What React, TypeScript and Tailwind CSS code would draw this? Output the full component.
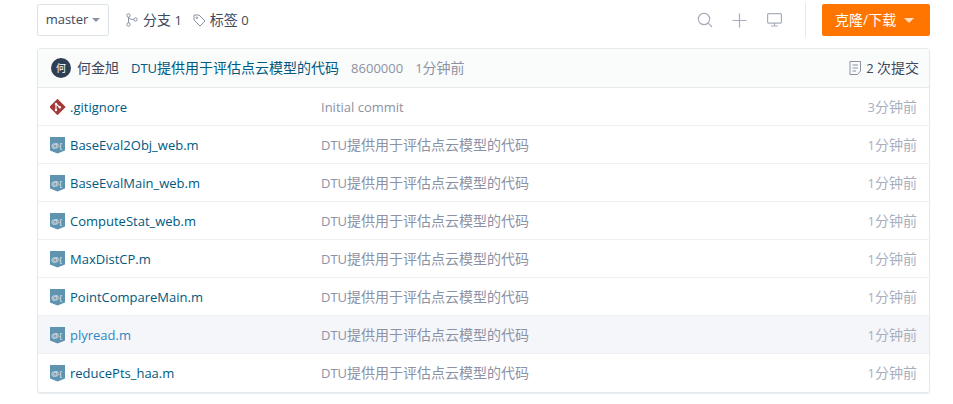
const Cjk = ({ children }: { children: React.ReactNode }) => <span className="text-sm">{children}</span>

interface FileRow {
    name: string
    initial?: boolean
    hover?: boolean
}

const files: FileRow[] = [
    { name: ".gitignore", initial: true },
    { name: "BaseEval2Obj_web.m" },
    { name: "BaseEvalMain_web.m" },
    { name: "ComputeStat_web.m" },
    { name: "MaxDistCP.m" },
    { name: "PointCompareMain.m" },
    { name: "plyread.m", hover: true },
    { name: "reducePts_haa.m" },
]

const GitIcon = () => (
    <svg width="16" height="16" viewBox="0 0 16 16" className="shrink-0">
        <path d="M7.5 .8 14.7 8 7.5 15.2 .3 8Z" fill="#a33a3a" stroke="#a33a3a" strokeLinejoin="round" strokeWidth="1.4" />
        <circle cx="6" cy="5" r="1.2" fill="#fff" />
        <circle cx="9.8" cy="8.2" r="1.2" fill="#fff" />
        <circle cx="6" cy="11" r="1.2" fill="#fff" />
        <path d="M6 5V11M6 5 9.8 8.2" stroke="#fff" strokeWidth="1.1" fill="none" />
    </svg>
)

const MatlabIcon = () => (
    <svg width="15" height="17" viewBox="0 0 15 17" className="shrink-0">
        <path d="M0 0H15V13.5L7.5 16.5 0 13.5Z" fill="#5f93b0" />
        <text x="1" y="10.5" fontSize="8" fill="#e8f1f5" fontFamily="'Liberation Sans', sans-serif">@{"{"}</text>
    </svg>
)

const App = () => {
    return (
        <div className="w-[953px] h-[404px] overflow-hidden bg-white pl-[37px] pr-[23px] pt-1 text-[13px] font-['Open_Sans','Noto_Sans_CJK_SC',sans-serif] text-[#40485b]">
            <div className="flex items-center h-8">
                <div className="flex items-center w-[72px] h-8 justify-center gap-1 rounded-[2px] border border-[#dce3e8]">
                    master
                    <span className="border-x-[4px] border-t-[4px] border-x-transparent border-t-[#8c92a4]" />
                </div>
                <div className="flex items-center gap-1 ml-[16px]">
                    <svg width="14" height="14" viewBox="0 0 14 14" fill="none" stroke="#8c92a4" strokeWidth="1">
                        <circle cx="3.5" cy="2.5" r="1.7" />
                        <circle cx="3.5" cy="11.5" r="1.7" />
                        <circle cx="10.5" cy="6.5" r="1.7" />
                        <path d="M3.5 4.2V9.8M3.5 4.2C4 6 6.5 6.5 8.8 6.5" />
                    </svg>
                    <span><Cjk>分支</Cjk> 1</span>
                </div>
                <div className="flex items-center gap-1 ml-[11px]">
                    <svg width="13" height="13" viewBox="0 0 13 13" fill="none" stroke="#8c92a4" strokeWidth="1">
                        <path d="M1 1H6L12 7 7 12 1 6Z" strokeLinejoin="round" />
                        <circle cx="3.8" cy="3.8" r="0.8" />
                    </svg>
                    <span><Cjk>标签</Cjk> 0</span>
                </div>
                <div className="flex items-center ml-auto">
                    <svg width="16" height="16" viewBox="0 0 16 16" fill="none" stroke="#a9aebd" strokeWidth="1.2">
                        <circle cx="7" cy="7" r="5.7" />
                        <path d="M11.2 11.2 15 15" />
                    </svg>
                    <svg width="15" height="15" viewBox="0 0 15 15" fill="none" stroke="#a9aebd" strokeWidth="1.2" className="ml-[19px]">
                        <path d="M7.5 0.5V14.5M0.5 7.5H14.5" />
                    </svg>
                    <svg width="15" height="14" viewBox="0 0 15 14" fill="none" stroke="#a9aebd" strokeWidth="1.2" className="ml-[20px]">
                        <rect x="0.6" y="0.6" width="13.8" height="9.5" rx="1" />
                        <path d="M7.5 10V13M4 13H11" />
                    </svg>
                    <div className="w-px h-[34px] bg-[#e3e6ea] ml-[23px] mr-4" />
                    <div className="flex items-center pl-[13px] gap-2 w-[108px] h-8 rounded-[2px] bg-[#ff7500] text-white text-sm">
                        克隆/下载
                        <span className="border-x-[5px] border-t-[5px] border-x-transparent border-t-[#ffe0c4]" />
                    </div>
                </div>
            </div>

            <div className="mt-3 rounded-[3px] border border-[#e3e9ed] shadow-[0_1px_1px_#e8ebef]">
                <div className="flex items-center h-[39px] pl-[13px] pr-[10px] bg-[#fafbfb] border-b border-[#e3e9ed]">
                    <div className="flex items-center justify-center size-5 rounded-full bg-[#2e3e55] text-white text-[10px]">何</div>
                    <span className="ml-[6px] text-sm">何金旭</span>
                    <span className="ml-3 text-[#005980]">DTU<Cjk>提供用于评估点云模型的代码</Cjk></span>
                    <span className="ml-3 pt-[2px] text-[#8c92a4]">8600000</span>
                    <span className="ml-3 text-[#8c92a4]">1<Cjk>分钟前</Cjk></span>
                    <div className="flex items-center gap-1 ml-auto">
                        <svg width="13" height="14" viewBox="0 0 13 14" fill="none" stroke="#8c92a4" strokeWidth="1">
                            <path d="M1 .5H11.5V10L8.5 13.5H1ZM3.5 4H9M3.5 7H9M3.5 10H7" />
                        </svg>
                        <span>2 <Cjk>次提交</Cjk></span>
                    </div>
                </div>
                {files.map((file, index) => (
                    <div
                        key={file.name}
                        className={`flex items-center h-[38px] pl-3 pr-3 pt-px border-b ${index < files.length - 1 ? "border-[#eef0f3]" : "border-transparent"} ${file.hover ? "bg-[#f5f6fa]" : ""}`}
                    >
                        <div className="flex w-[20px] shrink-0">{file.initial ? <GitIcon /> : <MatlabIcon />}</div>
                        <span className={`w-[251px] shrink-0 pt-[2px] ${file.hover ? "text-[#2b86c5]" : "text-[#005980]"}`}>{file.name}</span>
                        <span className={`text-[#8c92a4] ${file.initial ? "pt-[2px]" : ""}`}>
                            {file.initial ? "Initial commit" : <>DTU<Cjk>提供用于评估点云模型的代码</Cjk></>}
                        </span>
                        <span className="ml-auto text-[#a9aebd]">{file.initial ? "3" : "1"}<Cjk>分钟前</Cjk></span>
                    </div>
                ))}
            </div>
        </div>
    )
}

export default App
